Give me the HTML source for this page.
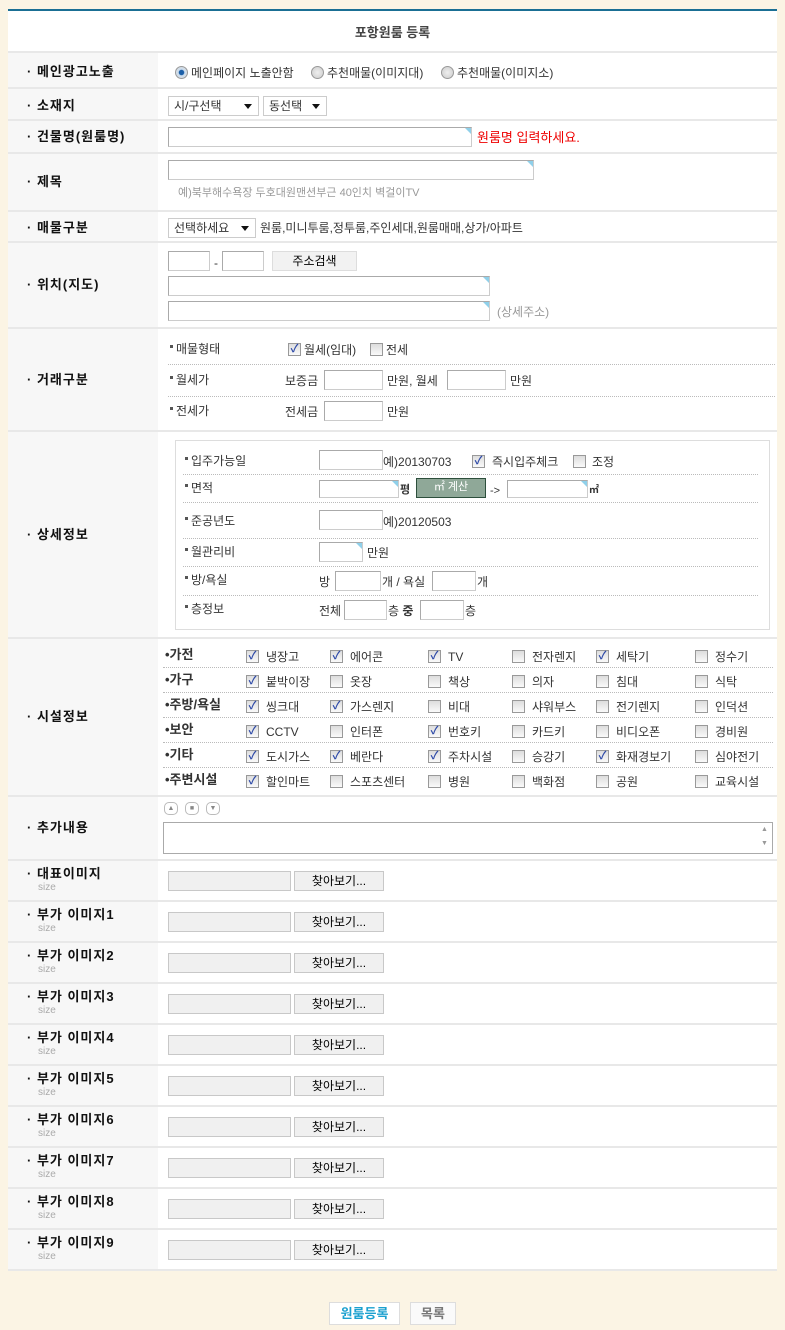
<!DOCTYPE html>
<html><head><meta charset="utf-8">
<style>
*{margin:0;padding:0;box-sizing:border-box}
body{width:785px;height:1330px;background:#fbf4e4;font-family:"Liberation Sans","Noto Sans CJK KR","NanumGothic",sans-serif;font-size:12px;color:#333;position:relative;overflow:hidden}
.a{position:absolute;white-space:nowrap}
#box{position:absolute;left:8px;top:9px;width:769px;height:1262px;background:#fff;border-top:2px solid #1a6f94}
.lc{position:absolute;left:8px;width:150px;background:#f7f7f7}
.sep{position:absolute;left:8px;width:769px;height:2px;background:#e8e8e8}
.lb{position:absolute;left:27px;font-weight:bold;font-size:13px;color:#111;white-space:nowrap;line-height:14px;letter-spacing:1px}
.in{position:absolute;background:#fff;border:1px solid #ccc;border-top-color:#aaa;border-left-color:#aaa}
.tri::after{content:"";position:absolute;right:0;top:0;border-top:6px solid #8fd0ea;border-left:6px solid transparent}
.sel{position:absolute;background:#fff;border:1px solid #ccc;height:20px;line-height:18px;padding-left:5px;font-size:12px;color:#333}
.sel::after{content:"";position:absolute;right:6px;top:7px;border-top:5px solid #111;border-left:4px solid transparent;border-right:4px solid transparent}
.cb{position:absolute;width:13px;height:13px;border:1px solid #999;background:linear-gradient(#ddd,#fafafa);font-size:11px;line-height:11px;text-align:center;color:#2e4aa8;font-weight:bold}
.rd{position:absolute;width:13px;height:13px;border-radius:50%;border:1px solid #999;background:radial-gradient(#eee,#ccc)}
.rd.on{background:radial-gradient(#1b5fa8 30%,#cde 40%,#ddd)}
.dot{position:absolute;height:0;border-top:1px dotted #bbb}
.t{position:absolute;white-space:nowrap;line-height:14px}
.sq{display:inline-block;width:3px;height:3px;background:#555;vertical-align:middle;margin-right:3px;position:relative;top:-3px}
.fb{position:absolute;height:20px;background:#f0f0f0;border:1px solid #c8c8c8}
.fbt{position:absolute;height:20px;background:#f0f0f0;border:1px solid #c8c8c8;text-align:center;line-height:18px;font-size:12px;color:#000}
.sz{position:absolute;left:38px;font-size:10px;color:#aaa}
.rb{position:absolute;width:14px;height:13px;border:1px solid #bbb;border-radius:5px;background:#fff;font-size:7px;text-align:center;line-height:11px;color:#888}
</style></head><body>
<div id="box"></div>
<div class="a" style="left:0;top:22px;width:785px;text-align:center;font-weight:bold;font-size:13px;color:#444">포항원룸 등록</div>
<div class="sep" style="top:51px"></div>
<div class="lc" style="top:53px;height:1217px"></div>

<div class="sep" style="top:87px"></div>
<div class="sep" style="top:119px"></div>
<div class="sep" style="top:152px"></div>
<div class="sep" style="top:210px"></div>
<div class="sep" style="top:241px"></div>
<div class="sep" style="top:327px"></div>
<div class="sep" style="top:430px"></div>
<div class="sep" style="top:637px"></div>
<div class="sep" style="top:795px"></div>
<div class="sep" style="top:859px"></div>
<div class="sep" style="top:900px"></div>
<div class="sep" style="top:941px"></div>
<div class="sep" style="top:982px"></div>
<div class="sep" style="top:1023px"></div>
<div class="sep" style="top:1064px"></div>
<div class="sep" style="top:1105px"></div>
<div class="sep" style="top:1146px"></div>
<div class="sep" style="top:1187px"></div>
<div class="sep" style="top:1228px"></div>
<div class="sep" style="top:1269px"></div>

<div class="lb" style="top:65px">· 메인광고노출</div>
<div class="rd on" style="left:175px;top:66px"></div><div class="t" style="left:191px;top:66px">메인페이지 노출안함</div>
<div class="rd" style="left:311px;top:66px"></div><div class="t" style="left:327px;top:66px">추천매물(이미지대)</div>
<div class="rd" style="left:441px;top:66px"></div><div class="t" style="left:457px;top:66px">추천매물(이미지소)</div>
<div class="lb" style="top:99px">· 소재지</div>
<div class="sel" style="left:168px;top:96px;width:91px">시/구선택</div>
<div class="sel" style="left:263px;top:96px;width:64px">동선택</div>
<div class="lb" style="top:130px">· 건물명(원룸명)</div>
<div class="in tri" style="left:168px;top:127px;width:304px;height:20px"></div>
<div class="t" style="left:477px;top:131px;color:#e00;font-size:13px">원룸명 입력하세요.</div>
<div class="lb" style="top:175px">· 제목</div>
<div class="in tri" style="left:168px;top:160px;width:366px;height:20px"></div>
<div class="t" style="left:178px;top:186px;color:#999;font-size:11px">예)북부해수욕장 두호대원맨션부근 40인치 벽걸이TV</div>
<div class="lb" style="top:221px">· 매물구분</div>
<div class="sel" style="left:168px;top:218px;width:88px">선택하세요</div>
<div class="t" style="left:260px;top:221px">원룸,미니투룸,정투룸,주인세대,원룸매매,상가/아파트</div>
<div class="lb" style="top:278px">· 위치(지도)</div>
<div class="in" style="left:168px;top:251px;width:42px;height:20px"></div>
<div class="t" style="left:214px;top:256px">-</div>
<div class="in" style="left:222px;top:251px;width:42px;height:20px"></div>
<div class="fbt" style="left:272px;top:251px;width:85px;background:#f2f2f2;border-color:#ddd">주소검색</div>
<div class="in tri" style="left:168px;top:276px;width:322px;height:20px"></div>
<div class="in tri" style="left:168px;top:301px;width:322px;height:20px"></div>
<div class="t" style="left:497px;top:305px;color:#999">(상세주소)</div>
<div class="lb" style="top:373px">· 거래구분</div>
<div class="t" style="left:170px;top:342px"><span class="sq"></span>매물형태</div>
<div class="cb" style="left:288px;top:343px">✓</div><div class="t" style="left:304px;top:343px">월세(임대)</div>
<div class="cb" style="left:370px;top:343px"></div><div class="t" style="left:386px;top:343px">전세</div>
<div class="dot" style="left:168px;top:364px;width:607px"></div>
<div class="t" style="left:170px;top:373px"><span class="sq"></span>월세가</div>
<div class="t" style="left:285px;top:374px">보증금</div>
<div class="in" style="left:324px;top:370px;width:59px;height:20px"></div>
<div class="t" style="left:387px;top:374px">만원, 월세</div>
<div class="in" style="left:447px;top:370px;width:59px;height:20px"></div>
<div class="t" style="left:510px;top:374px">만원</div>
<div class="dot" style="left:168px;top:396px;width:607px"></div>
<div class="t" style="left:170px;top:404px"><span class="sq"></span>전세가</div>
<div class="t" style="left:285px;top:405px">전세금</div>
<div class="in" style="left:324px;top:401px;width:59px;height:20px"></div>
<div class="t" style="left:387px;top:405px">만원</div>
<div class="lb" style="top:528px">· 상세정보</div>
<div class="a" style="left:175px;top:440px;width:595px;height:190px;border:1px solid #ddd"></div>
<div class="t" style="left:185px;top:454px"><span class="sq"></span>입주가능일</div>
<div class="in" style="left:319px;top:450px;width:64px;height:20px"></div>
<div class="t" style="left:383px;top:455px">예)20130703</div>
<div class="cb" style="left:472px;top:455px">✓</div><div class="t" style="left:492px;top:455px">즉시입주체크</div>
<div class="cb" style="left:573px;top:455px"></div><div class="t" style="left:592px;top:455px">조정</div>
<div class="dot" style="left:183px;top:474px;width:575px"></div>
<div class="t" style="left:185px;top:481px"><span class="sq"></span>면적</div>
<div class="in tri" style="left:319px;top:480px;width:80px;height:18px"></div>
<div class="t" style="left:400px;top:483px;font-weight:bold;font-size:11px">평</div>
<div class="a" style="left:416px;top:478px;width:70px;height:20px;background:#8fa898;border:1px solid #2d4f3c;text-align:center;line-height:17px;font-size:11px;color:#fff">㎡ 계산</div>
<div class="t" style="left:490px;top:484px;font-size:11px">-&gt;</div>
<div class="in tri" style="left:507px;top:480px;width:81px;height:18px"></div>
<div class="t" style="left:589px;top:484px;font-size:10px;font-weight:bold">㎡</div>
<div class="dot" style="left:183px;top:502px;width:575px"></div>
<div class="t" style="left:185px;top:514px"><span class="sq"></span>준공년도</div>
<div class="in" style="left:319px;top:510px;width:64px;height:20px"></div>
<div class="t" style="left:383px;top:515px">예)20120503</div>
<div class="dot" style="left:183px;top:538px;width:575px"></div>
<div class="t" style="left:185px;top:545px"><span class="sq"></span>월관리비</div>
<div class="in tri" style="left:319px;top:542px;width:44px;height:20px"></div>
<div class="t" style="left:367px;top:546px">만원</div>
<div class="dot" style="left:183px;top:566px;width:575px"></div>
<div class="t" style="left:185px;top:573px"><span class="sq"></span>방/욕실</div>
<div class="t" style="left:319px;top:575px">방</div>
<div class="in" style="left:335px;top:571px;width:46px;height:20px"></div>
<div class="t" style="left:382px;top:575px">개 / 욕실</div>
<div class="in" style="left:432px;top:571px;width:44px;height:20px"></div>
<div class="t" style="left:477px;top:575px">개</div>
<div class="dot" style="left:183px;top:595px;width:575px"></div>
<div class="t" style="left:185px;top:602px"><span class="sq"></span>층정보</div>
<div class="t" style="left:319px;top:604px">전체</div>
<div class="in" style="left:344px;top:600px;width:43px;height:20px"></div>
<div class="t" style="left:388px;top:604px">층 <b>중</b></div>
<div class="in" style="left:420px;top:600px;width:44px;height:20px"></div>
<div class="t" style="left:465px;top:604px">층</div>
<div class="lb" style="top:710px">· 시설정보</div>
<div class="lb" style="top:821px">· 추가내용</div>
<div class="rb" style="left:164px;top:802px">▲</div>
<div class="rb" style="left:185px;top:802px">■</div>
<div class="rb" style="left:206px;top:802px">▼</div>
<div class="in tri" style="left:163px;top:822px;width:610px;height:32px;border-color:#aaa"></div>
<div class="a" style="left:757px;top:823px;width:15px;height:30px;background:#fff;font-size:7px;color:#999;text-align:center;line-height:14px">▲<br>▼</div>
<div class="a" style="left:329px;top:1302px;width:71px;height:23px;background:#fff;border:1px solid #ddd;text-align:center;line-height:21px;font-weight:bold;color:#1aa0cf;font-size:13px">원룸등록</div>
<div class="a" style="left:410px;top:1302px;width:46px;height:23px;background:#fafafa;border:1px solid #ddd;text-align:center;line-height:21px;font-weight:bold;color:#777;font-size:13px">목록</div>

<div class="t" style="left:165px;top:648px;font-weight:bold;font-size:13px">•가전</div>
<div class="t" style="left:165px;top:673px;font-weight:bold;font-size:13px">•가구</div>
<div class="t" style="left:165px;top:698px;font-weight:bold;font-size:13px">•주방/욕실</div>
<div class="t" style="left:165px;top:723px;font-weight:bold;font-size:13px">•보안</div>
<div class="t" style="left:165px;top:748px;font-weight:bold;font-size:13px">•기타</div>
<div class="t" style="left:165px;top:773px;font-weight:bold;font-size:13px">•주변시설</div>
<div class="dot" style="left:163px;top:667px;width:610px"></div>
<div class="dot" style="left:163px;top:692px;width:610px"></div>
<div class="dot" style="left:163px;top:717px;width:610px"></div>
<div class="dot" style="left:163px;top:742px;width:610px"></div>
<div class="dot" style="left:163px;top:767px;width:610px"></div>

<div class="cb" style="left:246px;top:650px">✓</div><div class="t" style="left:266px;top:650px">냉장고</div>
<div class="cb" style="left:330px;top:650px">✓</div><div class="t" style="left:350px;top:650px">에어콘</div>
<div class="cb" style="left:428px;top:650px">✓</div><div class="t" style="left:448px;top:650px">TV</div>
<div class="cb" style="left:512px;top:650px"></div><div class="t" style="left:532px;top:650px">전자렌지</div>
<div class="cb" style="left:596px;top:650px">✓</div><div class="t" style="left:616px;top:650px">세탁기</div>
<div class="cb" style="left:695px;top:650px"></div><div class="t" style="left:715px;top:650px">정수기</div>
<div class="cb" style="left:246px;top:675px">✓</div><div class="t" style="left:266px;top:675px">붙박이장</div>
<div class="cb" style="left:330px;top:675px"></div><div class="t" style="left:350px;top:675px">옷장</div>
<div class="cb" style="left:428px;top:675px"></div><div class="t" style="left:448px;top:675px">책상</div>
<div class="cb" style="left:512px;top:675px"></div><div class="t" style="left:532px;top:675px">의자</div>
<div class="cb" style="left:596px;top:675px"></div><div class="t" style="left:616px;top:675px">침대</div>
<div class="cb" style="left:695px;top:675px"></div><div class="t" style="left:715px;top:675px">식탁</div>
<div class="cb" style="left:246px;top:700px">✓</div><div class="t" style="left:266px;top:700px">씽크대</div>
<div class="cb" style="left:330px;top:700px">✓</div><div class="t" style="left:350px;top:700px">가스렌지</div>
<div class="cb" style="left:428px;top:700px"></div><div class="t" style="left:448px;top:700px">비대</div>
<div class="cb" style="left:512px;top:700px"></div><div class="t" style="left:532px;top:700px">샤워부스</div>
<div class="cb" style="left:596px;top:700px"></div><div class="t" style="left:616px;top:700px">전기렌지</div>
<div class="cb" style="left:695px;top:700px"></div><div class="t" style="left:715px;top:700px">인덕션</div>
<div class="cb" style="left:246px;top:725px">✓</div><div class="t" style="left:266px;top:725px">CCTV</div>
<div class="cb" style="left:330px;top:725px"></div><div class="t" style="left:350px;top:725px">인터폰</div>
<div class="cb" style="left:428px;top:725px">✓</div><div class="t" style="left:448px;top:725px">번호키</div>
<div class="cb" style="left:512px;top:725px"></div><div class="t" style="left:532px;top:725px">카드키</div>
<div class="cb" style="left:596px;top:725px"></div><div class="t" style="left:616px;top:725px">비디오폰</div>
<div class="cb" style="left:695px;top:725px"></div><div class="t" style="left:715px;top:725px">경비원</div>
<div class="cb" style="left:246px;top:750px">✓</div><div class="t" style="left:266px;top:750px">도시가스</div>
<div class="cb" style="left:330px;top:750px">✓</div><div class="t" style="left:350px;top:750px">베란다</div>
<div class="cb" style="left:428px;top:750px">✓</div><div class="t" style="left:448px;top:750px">주차시설</div>
<div class="cb" style="left:512px;top:750px"></div><div class="t" style="left:532px;top:750px">승강기</div>
<div class="cb" style="left:596px;top:750px">✓</div><div class="t" style="left:616px;top:750px">화재경보기</div>
<div class="cb" style="left:695px;top:750px"></div><div class="t" style="left:715px;top:750px">심야전기</div>
<div class="cb" style="left:246px;top:775px">✓</div><div class="t" style="left:266px;top:775px">할인마트</div>
<div class="cb" style="left:330px;top:775px"></div><div class="t" style="left:350px;top:775px">스포츠센터</div>
<div class="cb" style="left:428px;top:775px"></div><div class="t" style="left:448px;top:775px">병원</div>
<div class="cb" style="left:512px;top:775px"></div><div class="t" style="left:532px;top:775px">백화점</div>
<div class="cb" style="left:596px;top:775px"></div><div class="t" style="left:616px;top:775px">공원</div>
<div class="cb" style="left:695px;top:775px"></div><div class="t" style="left:715px;top:775px">교육시설</div>

<div class="lb" style="top:867px">· 대표이미지</div><div class="sz" style="top:882px">size</div>
<div class="fb" style="left:168px;top:871px;width:123px"></div><div class="fbt" style="left:294px;top:871px;width:90px">찾아보기...</div>
<div class="lb" style="top:908px">· 부가 이미지1</div><div class="sz" style="top:923px">size</div>
<div class="fb" style="left:168px;top:912px;width:123px"></div><div class="fbt" style="left:294px;top:912px;width:90px">찾아보기...</div>
<div class="lb" style="top:949px">· 부가 이미지2</div><div class="sz" style="top:964px">size</div>
<div class="fb" style="left:168px;top:953px;width:123px"></div><div class="fbt" style="left:294px;top:953px;width:90px">찾아보기...</div>
<div class="lb" style="top:990px">· 부가 이미지3</div><div class="sz" style="top:1005px">size</div>
<div class="fb" style="left:168px;top:994px;width:123px"></div><div class="fbt" style="left:294px;top:994px;width:90px">찾아보기...</div>
<div class="lb" style="top:1031px">· 부가 이미지4</div><div class="sz" style="top:1046px">size</div>
<div class="fb" style="left:168px;top:1035px;width:123px"></div><div class="fbt" style="left:294px;top:1035px;width:90px">찾아보기...</div>
<div class="lb" style="top:1072px">· 부가 이미지5</div><div class="sz" style="top:1087px">size</div>
<div class="fb" style="left:168px;top:1076px;width:123px"></div><div class="fbt" style="left:294px;top:1076px;width:90px">찾아보기...</div>
<div class="lb" style="top:1113px">· 부가 이미지6</div><div class="sz" style="top:1128px">size</div>
<div class="fb" style="left:168px;top:1117px;width:123px"></div><div class="fbt" style="left:294px;top:1117px;width:90px">찾아보기...</div>
<div class="lb" style="top:1154px">· 부가 이미지7</div><div class="sz" style="top:1169px">size</div>
<div class="fb" style="left:168px;top:1158px;width:123px"></div><div class="fbt" style="left:294px;top:1158px;width:90px">찾아보기...</div>
<div class="lb" style="top:1195px">· 부가 이미지8</div><div class="sz" style="top:1210px">size</div>
<div class="fb" style="left:168px;top:1199px;width:123px"></div><div class="fbt" style="left:294px;top:1199px;width:90px">찾아보기...</div>
<div class="lb" style="top:1236px">· 부가 이미지9</div><div class="sz" style="top:1251px">size</div>
<div class="fb" style="left:168px;top:1240px;width:123px"></div><div class="fbt" style="left:294px;top:1240px;width:90px">찾아보기...</div>
</body></html>
